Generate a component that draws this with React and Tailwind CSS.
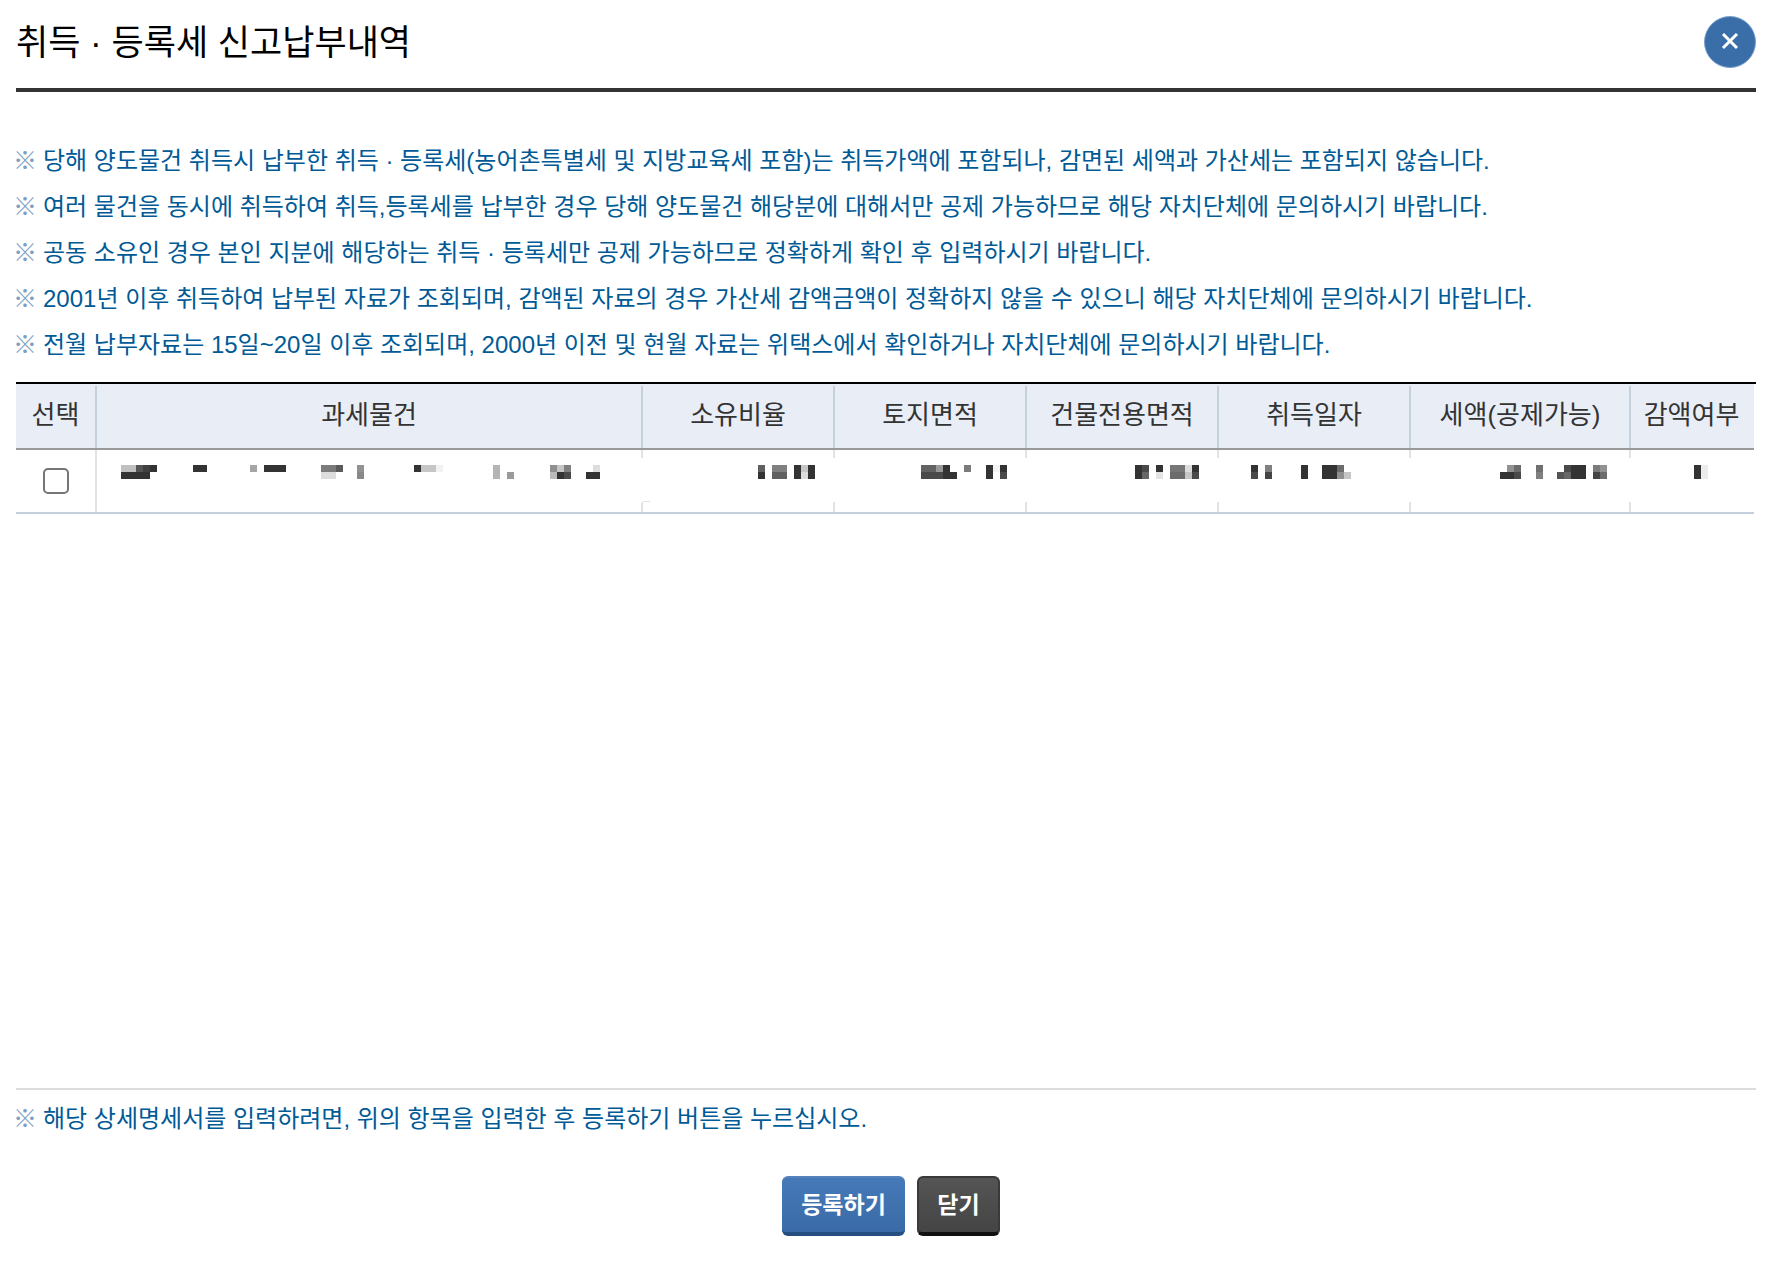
const notices = [
  '당해 양도물건 취득시 납부한 취득 · 등록세(농어촌특별세 및 지방교육세 포함)는 취득가액에 포함되나, 감면된 세액과 가산세는 포함되지 않습니다.',
  '여러 물건을 동시에 취득하여 취득,등록세를 납부한 경우 당해 양도물건 해당분에 대해서만 공제 가능하므로 해당 자치단체에 문의하시기 바랍니다.',
  '공동 소유인 경우 본인 지분에 해당하는 취득 · 등록세만 공제 가능하므로 정확하게 확인 후 입력하시기 바랍니다.',
  '2001년 이후 취득하여 납부된 자료가 조회되며, 감액된 자료의 경우 가산세 감액금액이 정확하지 않을 수 있으니 해당 자치단체에 문의하시기 바랍니다.',
  '전월 납부자료는 15일~20일 이후 조회되며, 2000년 이전 및 현월 자료는 위택스에서 확인하거나 자치단체에 문의하시기 바랍니다.',
]

// Masked values: [x, width, upper colour, lower colour]
const maskedRow = [
  {
    title: '과세물건',
    width: 479,
    align: 'justify-start pl-6',
    blocks: [
      [0, 15, '#c0c0c0', '#333'], [15, 7, '#555', '#333'], [22, 7, '#404040', '#333'], [29, 7, '#333', null],
      [72, 14, '#333', null], [129, 7, '#a5a5a5', null], [143, 22, '#333', null],
      [200, 15, '#7b7b7b', '#ddd'], [215, 7, '#5a5a5a', null], [236, 7, '#929292', '#888'],
      [293, 7, '#333', null], [300, 15, '#c6c6c6', null], [315, 7, '#f2f2f2', null],
      [372, 7, '#b5b5b5', '#b5b5b5'], [386, 7, null, '#9a9a9a'],
      [429, 7, '#8f8f8f', '#bbb'], [436, 7, '#c6c6c6', '#333'], [443, 7, '#808080', '#4a4a4a'],
      [465, 7, null, '#333'], [472, 7, '#ddd', '#333'],
    ],
  },
  {
    title: '소유비율',
    width: 57,
    align: 'justify-end pr-5',
    blocks: [
      [0, 7, '#606060', '#333'], [14, 15, '#808080', '#606060'], [36, 7, '#333', '#333'],
      [43, 7, '#c6c6c6', '#ddd'], [50, 7, '#333', '#333'],
    ],
  },
  {
    title: '토지면적',
    width: 86,
    align: 'justify-end pr-5',
    blocks: [
      [0, 15, '#636363', '#4a4a4a'], [15, 7, '#999', '#4a4a4a'], [22, 7, '#333', '#333'], [29, 7, null, '#333'],
      [43, 7, '#7b7b7b', null], [65, 7, '#333', '#333'], [72, 7, '#f3f3f3', null], [79, 7, '#333', '#4a4a4a'],
    ],
  },
  {
    title: '건물전용면적',
    width: 64,
    align: 'justify-end pr-5',
    blocks: [
      [0, 7, '#333', '#333'], [7, 7, '#4a4a4a', '#666'], [21, 7, '#333', '#e3e3e3'],
      [35, 15, '#777', '#6c6c6c'], [50, 7, '#ddd', '#c6c6c6'], [57, 7, '#333', '#4a4a4a'],
    ],
  },
  {
    title: '취득일자',
    width: 100,
    align: 'justify-start pl-8',
    blocks: [
      [0, 7, '#333', '#4a4a4a'], [14, 7, '#808080', '#444'], [50, 7, '#333', '#333'],
      [71, 15, '#333', '#333'], [86, 7, '#6c6c6c', '#8f8f8f'], [93, 7, null, '#c6c6c6'],
    ],
  },
  {
    title: '세액(공제가능)',
    width: 107,
    align: 'justify-end pr-6',
    blocks: [
      [0, 7, null, '#333'], [7, 7, '#929292', '#333'], [14, 7, '#6c6c6c', '#4a4a4a'], [36, 7, '#707070', '#808080'],
      [57, 7, null, '#555'], [64, 7, '#4a4a4a', '#666'], [71, 15, '#333', '#333'],
      [93, 7, '#7b7b7b', '#444'], [100, 7, '#929292', '#6c6c6c'],
    ],
  },
  {
    title: '감액여부',
    width: 14,
    align: 'justify-center pl-4',
    blocks: [[0, 7, '#333', '#333'], [7, 7, '#ebebeb', '#ebebeb']],
  },
]

function Masked({ width, blocks }) {
  return (
    <svg width={width} height="14" viewBox={`0 0 ${width} 14`} shapeRendering="crispEdges" aria-hidden="true" className="shrink-0">
      {blocks.map(([x, w, upper, lower]) => (
        <g key={x}>
          {upper && <rect x={x} y="0" width={w} height="7" fill={upper} />}
          {lower && <rect x={x} y="7" width={w} height="7" fill={lower} />}
        </g>
      ))}
    </svg>
  )
}

function Notice({ as: Tag = 'li', children }) {
  return (
    <Tag className="flex min-h-[46px] items-center text-[24px] leading-[46px] text-[#005a96]">
      <span aria-hidden="true" className="-ml-[3px] w-[30px] shrink-0 text-[#7d9fc2]">※</span>
      <span>{children}</span>
    </Tag>
  )
}

const headDivider =
  'bg-[linear-gradient(to_bottom,transparent_2px,#c5d0dd_2px)] bg-no-repeat bg-right bg-size-[2px_100%]'
const cellDivider =
  'bg-[linear-gradient(to_bottom,#e3e3e3_8px,transparent_8px,transparent_52px,#e3e3e3_52px)] bg-no-repeat bg-right bg-size-[2px_100%]'
// same divider plus the short tick at the left edge of the cell
const cellDividerTick =
  'bg-[linear-gradient(to_bottom,#e3e3e3_8px,transparent_8px,transparent_52px,#e3e3e3_52px),linear-gradient(#e3e3e3,#e3e3e3)] bg-no-repeat bg-position-[right_top,left_top_51px] bg-size-[2px_100%,7px_1px]'

function dividerFor(i) {
  if (i === maskedRow.length - 1) return ''
  return i === 1 ? cellDividerTick : cellDivider
}

export default function App() {
  return (
    <main className="flex min-h-screen flex-col bg-white px-4 pr-[18px] font-['Liberation_Sans','Noto_Sans_CJK_KR',sans-serif] text-[#333]">
      <header className="flex h-[92px] items-start justify-between border-b-4 border-[#333] pt-4">
        <h1 className="text-[35px] leading-[54px] text-black">취득 · 등록세 신고납부내역</h1>
        <button
          type="button"
          aria-label="닫기"
          className="flex size-[52px] items-center justify-center rounded-full border border-[#7a9fcb] bg-[#3a6ea9]"
        >
          <svg width="18" height="18" viewBox="0 0 18 18" fill="none" stroke="#fff" strokeWidth="3" aria-hidden="true">
            <path d="M2 1 16 15M16 1 2 15" />
          </svg>
        </button>
      </header>

      <ul className="mt-[46px]">
        {notices.map((text) => (
          <Notice key={text}>{text}</Notice>
        ))}
      </ul>

      <section className="mt-[14px] min-h-[708px] border-t-2 border-b-2 border-t-black border-b-[#ddd] pr-0.5">
        <table className="w-full table-fixed border-separate border-spacing-0">
          <colgroup>
            <col className="w-[81px]" />
            <col />
            <col className="w-[192px]" />
            <col className="w-[192px]" />
            <col className="w-[192px]" />
            <col className="w-[192px]" />
            <col className="w-[220px]" />
            <col className="w-[123px]" />
          </colgroup>
          <thead className="bg-[#e8edf6]">
            <tr className="h-[66px] text-[26px] leading-[36px]">
              <th scope="col" className={`border-b-2 border-[#999] pr-0.5 pb-0.5 font-normal ${headDivider}`}>선택</th>
              {maskedRow.map(({ title }, i) => (
                <th
                  key={title}
                  scope="col"
                  className={`border-b-2 border-[#999] pr-0.5 pb-0.5 font-normal ${i < maskedRow.length - 1 ? headDivider : ''}`}
                >
                  {title}
                </th>
              ))}
            </tr>
          </thead>
          <tbody>
            <tr className="h-16">
              <td className="border-b-2 border-[#c5d0dd] bg-[linear-gradient(#e3e3e3,#e3e3e3)] bg-size-[2px_100%] bg-right bg-no-repeat pr-0.5">
                <div className="flex items-center justify-center">
                  <input
                    type="checkbox"
                    aria-label="선택"
                    className="size-[26px] appearance-none rounded-[5px] border-2 border-[#767676] bg-white checked:bg-[#3a6ea9]"
                  />
                </div>
              </td>
              {maskedRow.map(({ title, width, align, blocks }, i) => (
                <td key={title} className={`border-b-2 border-[#c5d0dd] pt-[15px] align-top ${dividerFor(i)}`}>
                  <div className={`flex ${align}`}>
                    <Masked width={width} blocks={blocks} />
                  </div>
                </td>
              ))}
            </tr>
          </tbody>
        </table>
      </section>

      <div className="mt-[6px]">
        <Notice as="p">해당 상세명세서를 입력하려면, 위의 항목을 입력한 후 등록하기 버튼을 누르십시오.</Notice>
      </div>

      <div className="mt-[34px] flex justify-center gap-3 pl-2.5 text-[23px] leading-[30px] font-bold text-white">
        <button
          type="button"
          className="h-[60px] w-[123px] rounded-md border-t-2 border-b-4 border-t-[#5482bd] border-b-[#254f80] bg-linear-to-b from-[#4679b8] to-[#3a6ba8]"
        >
          등록하기
        </button>
        <button
          type="button"
          className="h-[60px] w-[83px] rounded-md border-2 border-b-4 border-[#3a3a3a] border-b-[#111] bg-linear-to-b from-[#555] to-[#444]"
        >
          닫기
        </button>
      </div>
    </main>
  )
}
